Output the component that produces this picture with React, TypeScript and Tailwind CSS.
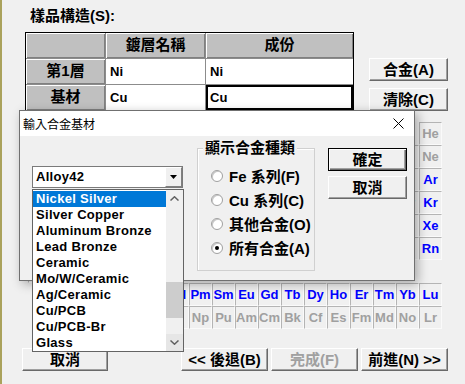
import React from "react";

const row = (l: string[], r: string[]) => [...l, ...Array(18 - l.length - r.length).fill(""), ...r];

const periodic = [
  row(["H"], ["He"]),
  row(["Li", "Be"], ["B", "C", "N", "O", "F", "Ne"]),
  row(["Na", "Mg"], ["Al", "Si", "P", "S", "Cl", "Ar"]),
  "K Ca Sc Ti V Cr Mn Fe Co Ni Cu Zn Ga Ge As Se Br Kr".split(" "),
  "Rb Sr Y Zr Nb Mo Tc Ru Rh Pd Ag Cd In Sn Sb Te I Xe".split(" "),
  "Cs Ba La Hf Ta W Re Os Ir Pt Au Hg Tl Pb Bi Po At Rn".split(" "),
  row(["Fr", "Ra", "Ac"], []),
  row([], "La Ce Pr Nd Pm Sm Eu Gd Tb Dy Ho Er Tm Yb Lu".split(" ")),
  row([], "Ac Th Pa U Np Pu Am Cm Bk Cf Es Fm Md No Lr".split(" ")),
];

const disabled = new Set(["H", "He", "N", "O", "F", "Ne", "Cl", "Tc", "Po", "At"]);

const alloys = [
  "Nickel Silver",
  "Silver Copper",
  "Aluminum Bronze",
  "Lead Bronze",
  "Ceramic",
  "Mo/W/Ceramic",
  "Ag/Ceramic",
  "Cu/PCB",
  "Cu/PCB-Br",
  "Glass",
];

const btn =
  "flex items-center justify-center bg-[#f0f0f0] border border-t-white border-l-white border-r-[#696969] border-b-[#696969] shadow-[inset_-1px_-1px_0_#a0a0a0] text-[15px] font-bold leading-none";
const hdr =
  "flex items-center justify-center bg-[#c0c0c0] shadow-[inset_1px_1px_0_#fff,inset_-1px_-1px_0_#808080] text-[15px] font-bold";
const cell = "flex items-center bg-white pl-[4px] text-[13px] font-bold";

function Radio({ label, checked }: { label: string; checked?: boolean }) {
  return (
    <div className="h-[24px] flex items-center pl-[13px] gap-[6px]">
      <span className="w-[12px] h-[12px] rounded-full bg-white border border-[#a0a0a0] shadow-[inset_1px_1px_0_#c8c8c8] flex items-center justify-center">
        {checked && <span className="w-[4px] h-[4px] rounded-full bg-black" />}
      </span>
      <span className="text-[15px] font-bold leading-none">{label}</span>
    </div>
  );
}

export default function App() {
  return (
    <div className="relative w-[465px] h-[384px] overflow-hidden bg-[#f0f0f0] border-l-2 border-[#aaa25c] font-['Liberation_Sans','Noto_Sans_CJK_TC',sans-serif] text-black">
      {/* Sample structure */}
      <div className="pt-[8px] pl-[28px] text-[15px] font-bold leading-[16px]">樣品構造(S):</div>

      <div className="mt-[8px] flex items-start">
        <div className="ml-[23px] w-[329px] border border-black bg-[#8c8c8c] grid grid-cols-[79px_99px_147px] grid-rows-[25px_25px_25px] gap-px">
          <div className={hdr} />
          <div className={hdr}>鍍層名稱</div>
          <div className={hdr}>成份</div>
          <div className={hdr}>第1層</div>
          <div className={cell}>Ni</div>
          <div className={cell}>Ni</div>
          <div className={hdr}>基材</div>
          <div className={cell}>Cu</div>
          <div className={cell + " shadow-[inset_0_0_0_2px_#000]"}>Cu</div>
        </div>
        <div className="ml-[15px] mt-[26px] flex flex-col gap-[7px]">
          <button className={btn + " w-[79px] h-[23px]"}>合金(A)</button>
          <button className={btn + " w-[79px] h-[23px]"}>清除(C)</button>
        </div>
      </div>

      {/* Periodic table */}
      <div className="mt-[11px] ml-[26px] grid grid-cols-[repeat(18,23px)] grid-rows-[repeat(9,23px)]">
        {periodic.map((r, i) =>
          r.map((el, j) =>
            el ? (
              <div
                key={`${i}-${j}`}
                className={`flex items-center justify-center border-l border-t border-r border-b border-l-[#b4b4b4] border-t-[#b4b4b4] border-r-[#fafafa] border-b-[#fafafa] bg-[#f0f0f0] text-[13px] font-bold ${
                  i >= 8 || i === 6 || disabled.has(el) ? "text-[#a0a0a0]" : "text-[#0000ff]"
                }`}
              >
                {el}
              </div>
            ) : (
              <div key={`${i}-${j}`} />
            )
          )
        )}
      </div>

      {/* Wizard buttons */}
      <div className="mt-[19px] flex">
        <button className={btn + " ml-[20px] w-[86px] h-[23px]"}>取消</button>
        <button className={btn + " ml-[73px] w-[87px] h-[23px]"}>&lt;&lt; 後退(B)</button>
        <button className={btn + " ml-[3px] w-[87px] h-[23px] text-[#a0a0a0]"}>完成(F)</button>
        <button className={btn + " ml-[3px] w-[87px] h-[23px]"}>前進(N) &gt;&gt;</button>
      </div>

      {/* Dialog */}
      <div className="absolute left-[17px] top-[110px] w-[396px] h-[171px] border border-[#707070] bg-[#f0f0f0] shadow-[3px_3px_10px_rgba(0,0,0,0.3)] flex flex-col">
        <div className="h-[25px] bg-white flex items-center justify-between pl-[3px] pr-[10px]">
          <span className="text-[12px] font-['Noto_Sans_CJK_TC',sans-serif] leading-none">輸入合金基材</span>
          <svg width="11" height="11" viewBox="0 0 11 11">
            <path d="M0.5 0.5L10.5 10.5M10.5 0.5L0.5 10.5" stroke="#000" strokeWidth="1" />
          </svg>
        </div>
        <div className="flex">
          <div className="ml-[12px] mt-[30px] w-[151px] h-[22px] border border-[#7a7a7a] bg-white flex">
            <span className="flex-1 pl-[3px] text-[13px] font-bold tracking-[0.3px] leading-[20px]">Alloy42</span>
            <span className="w-[17px] h-[20px] bg-[#f0f0f0] border border-t-white border-l-white border-r-[#808080] border-b-[#808080] flex items-center justify-center">
              <svg width="7" height="4" viewBox="0 0 7 4">
                <path d="M0 0H7L3.5 4Z" fill="#000" />
              </svg>
            </span>
          </div>

          <div className="ml-[14px] mt-[12px] w-[118px] h-[123px] border border-[#d0d0d0] shadow-[inset_1px_1px_0_#fff]">
            <div className="-mt-[9px] ml-[5px] px-[2px] w-fit bg-[#f0f0f0] text-[15px] font-bold leading-[16px]">顯示合金種類</div>
            <div className="mt-[8px]">
              <Radio label="Fe 系列(F)" />
              <Radio label="Cu 系列(C)" />
              <Radio label="其他合金(O)" />
              <Radio label="所有合金(A)" checked />
            </div>
          </div>

          <div className="ml-[13px] mt-[12px] flex flex-col gap-[5px]">
            <button className="w-[79px] h-[23px] flex items-center justify-center bg-[#f0f0f0] border border-black shadow-[inset_1px_1px_0_#fff,inset_-1px_-1px_0_#696969,inset_-2px_-2px_0_#a0a0a0] text-[15px] font-bold leading-none">
              確定
            </button>
            <button className={btn + " w-[79px] h-[23px]"}>取消</button>
          </div>
        </div>
      </div>

      {/* Open dropdown list */}
      <div className="absolute left-[30px] top-[189px] w-[152px] h-[163px] border border-[#646464] bg-white flex">
        <div className="w-[133px] pt-[1px]">
          {alloys.map((a, i) => (
            <div
              key={a}
              className={`h-[16px] pl-[3px] text-[13px] font-bold tracking-[0.3px] leading-[16px] whitespace-nowrap ${
                i === 0 ? "bg-[#0078d7] text-white" : ""
              }`}
            >
              {a}
            </div>
          ))}
        </div>
        <div className="w-[17px] bg-[#f0f0f0] flex flex-col">
          <div className="h-[17px] flex items-center justify-center">
            <svg width="9" height="5" viewBox="0 0 9 5">
              <path d="M0.5 4.5L4.5 0.8L8.5 4.5" stroke="#606060" strokeWidth="1.5" fill="none" />
            </svg>
          </div>
          <div className="flex-1">
            <div className="mt-[75px] h-[36px] bg-[#cdcdcd]" />
          </div>
          <div className="h-[17px] bg-[#e6e6e6] flex items-center justify-center">
            <svg width="9" height="5" viewBox="0 0 9 5">
              <path d="M0.5 0.5L4.5 4.2L8.5 0.5" stroke="#606060" strokeWidth="1.5" fill="none" />
            </svg>
          </div>
        </div>
      </div>
    </div>
  );
}
